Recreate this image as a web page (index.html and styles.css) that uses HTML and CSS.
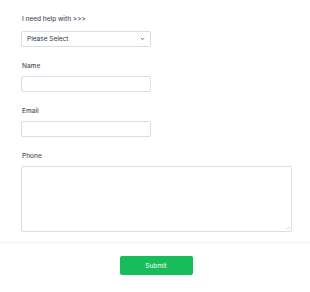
FILE: index.html
```html
<!DOCTYPE html>
<html lang="en">
<head>
    <meta charset="UTF-8">
    <meta name="viewport" content="width=device-width, initial-scale=1.0">
    <title>Help form</title>
    <link rel="stylesheet" href="styles.css">
</head>
<body>
    <form class="form">
        <div class="fields">
            <div class="field field-first">
                <label class="label" for="topic">I need help with &gt;&gt;&gt;</label>
                <div class="select-wrap">
                    <select id="topic" class="select">
                        <option>Please Select</option>
                    </select>
                    <svg class="chevron" width="5" height="4" viewBox="0 0 5 4">
                        <path d="M0.8 1 L2.5 2.7 L4.2 1" fill="none" stroke="#57647e" stroke-width="0.9"/>
                    </svg>
                </div>
            </div>
            <div class="field">
                <label class="label" for="name">Name</label>
                <input id="name" class="input" type="text">
            </div>
            <div class="field">
                <label class="label" for="email">Email</label>
                <input id="email" class="input" type="email">
            </div>
            <div class="field field-last">
                <label class="label" for="phone">Phone</label>
                <div class="textarea-wrap">
                    <textarea id="phone" class="textarea"></textarea>
                    <svg class="grip" width="5" height="5" viewBox="0 0 5 5">
                        <path d="M4.5 1 L1 4.5 M4.5 3 L3 4.5" stroke="#c3c8d1" stroke-width="0.6"/>
                    </svg>
                </div>
            </div>
        </div>
        <div class="footer">
            <button type="button" class="submit">Submit</button>
        </div>
    </form>
</body>
</html>
```

FILE: styles.css
```css
body, html {
    margin: 0;
    padding: 0;
    background: #fff;
    font-family: 'Inter', sans-serif;
}

.fields {
    padding: 15px 18px 0 21px;
}

.field {
    display: flex;
    flex-direction: column;
    align-items: flex-start;
    margin-bottom: 15px;
}

.field-last {
    margin-bottom: 10px;
}

.label {
    font-size: 6.5px;
    line-height: 9px;
    font-weight: 500;
    color: #4a5060;
    margin: 0 0 5px 1px;
}

.field-first .label {
    margin-bottom: 7px;
}

.select-wrap {
    position: relative;
    width: 130px;
    height: 16px;
}

.select,
.input,
.textarea {
    display: block;
    box-sizing: border-box;
    width: 130px;
    height: 16px;
    margin: 0;
    border: 1px solid #dadde4;
    border-radius: 2px;
    background: #fff;
    font-family: 'Inter', sans-serif;
    font-size: 6.5px;
    color: #2c3345;
    outline: none;
}

.select {
    appearance: none;
    padding: 0 0 0 5px;
    line-height: 14px;
}

.chevron {
    position: absolute;
    right: 6px;
    top: 6px;
}

.textarea-wrap {
    position: relative;
    width: 100%;
}

.textarea {
    width: 100%;
    height: 66px;
    resize: none;
}

.grip {
    position: absolute;
    right: 2px;
    bottom: 2px;
}

.footer {
    border-top: 1px solid #f1f1f3;
    display: flex;
    justify-content: center;
    padding-top: 13px;
}

.submit {
    width: 73px;
    height: 19px;
    border: none;
    border-radius: 2px;
    background: #18bd5b;
    color: #fff;
    font-family: 'Inter', sans-serif;
    font-size: 6.5px;
    font-weight: 400;
    margin-left: 2px;
}
```
